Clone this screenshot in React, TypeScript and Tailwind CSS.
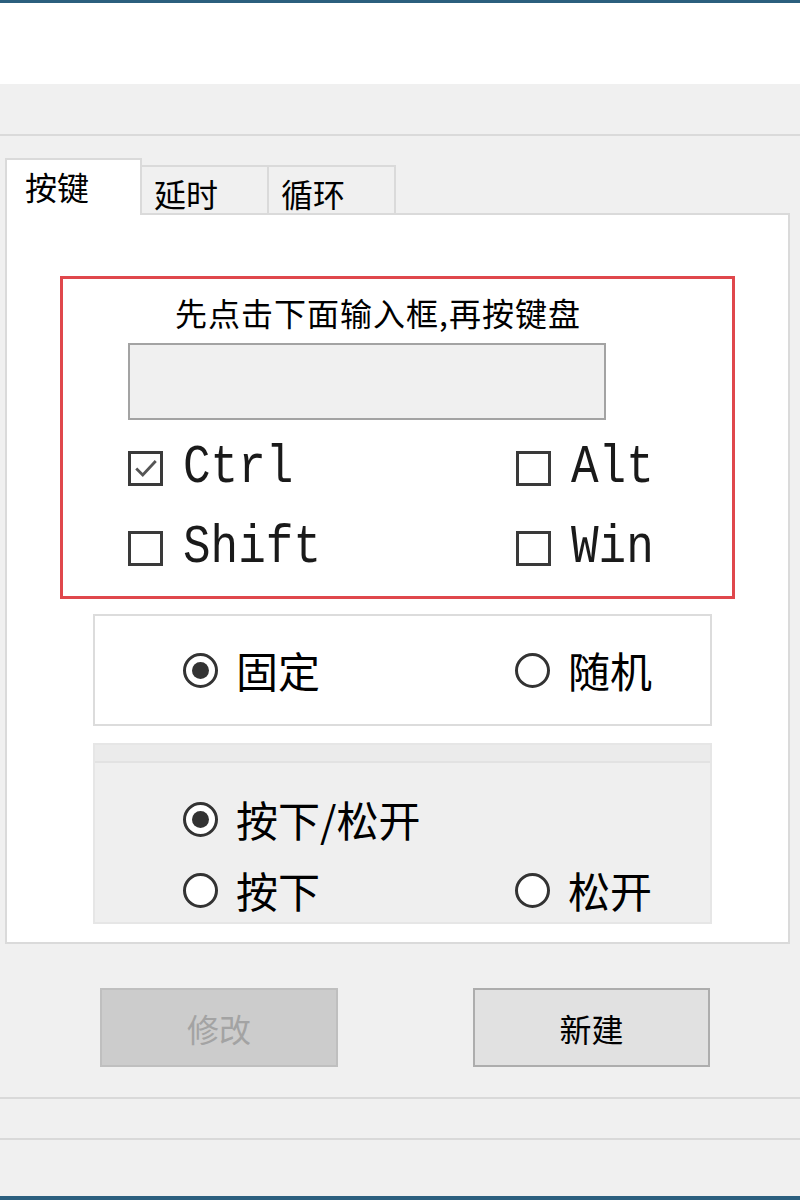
import { useState } from "react"

const cjk = "font-['Noto_Sans_CJK_SC',sans-serif]"
const mono = "font-['Liberation_Mono','Noto_Sans_CJK_SC',monospace]"

function CheckBox({ label, checked, onChange }: { label: string; checked: boolean; onChange: () => void }) {
  return (
    <button type="button" onClick={onChange} className="flex items-center gap-[20px]">
      <span className="flex h-[35px] w-[35px] items-center justify-center border-[3px] border-[#3a3a3a] bg-white">
        {checked && (
          <svg viewBox="0 0 24 24" className="h-[26px] w-[26px]">
            <path d="M3 12.5 L9 18.5 L21 5.5" fill="none" stroke="#555" strokeWidth="2.6" />
          </svg>
        )}
      </span>
      <span className={`${mono} inline-block scale-y-[1.15] text-[46px] leading-[46px] text-[#1a1a1a]`}>{label}</span>
    </button>
  )
}

function Radio({ label, checked, onSelect }: { label: string; checked: boolean; onSelect: () => void }) {
  return (
    <button type="button" onClick={onSelect} className="flex items-center gap-[18px]">
      <span className="flex h-[35px] w-[35px] items-center justify-center rounded-full border-[3px] border-[#333] bg-white">
        {checked && <span className="h-[17px] w-[17px] rounded-full bg-[#333]" />}
      </span>
      <span className={`${cjk} text-[42px] leading-[48px] text-black`}>{label}</span>
    </button>
  )
}

export default function App() {
  const [tab, setTab] = useState(0)
  const [mods, setMods] = useState({ Ctrl: true, Alt: false, Shift: false, Win: false })
  const [mode, setMode] = useState("fixed")
  const [action, setAction] = useState("both")

  const toggle = (k: keyof typeof mods) => setMods((m) => ({ ...m, [k]: !m[k] }))
  const tabs = ["按键", "延时", "循环"]

  return (
    <div className={`${cjk} flex h-[1200px] w-[800px] flex-col overflow-hidden bg-[#f0f0f0]`}>
      {/* title strip */}
      <div className="h-[3px] bg-[#2b5f7e]" />
      <div className="h-[81px] bg-white" />
      <div className="h-[52px] border-b-2 border-[#dadada]" />

      {/* tabs */}
      <div className="flex items-end pl-[5px] pt-[22px]">
        {tabs.map((t, i) =>
          i === tab ? (
            <button
              key={t}
              onClick={() => setTab(i)}
              className="relative z-10 -mb-[2px] flex h-[57px] w-[137px] items-start border-x-2 border-t-2 border-[#dadada] bg-white pl-[18px] pt-[6px] text-[32px] leading-[40px] text-black"
            >
              {t}
            </button>
          ) : (
            <button
              key={t}
              onClick={() => setTab(i)}
              className="flex h-[48px] w-[127px] items-start border-r-2 border-t-2 border-[#dadada] bg-[#f0f0f0] pl-[12px] pt-[6px] text-[32px] leading-[40px] text-black"
            >
              {t}
            </button>
          )
        )}
      </div>

      {/* tab page */}
      <div className="ml-[5px] mr-[10px] flex flex-col border-2 border-[#dadada] bg-white pb-[18px] pt-[61px]">
        <div className="ml-[53px] w-[675px] border-[3px] border-[#e0474c] pb-[25px] pl-[65px] pt-[14px]">
          <div className="pl-[47px] text-[32px] leading-[38px] tracking-[1px] text-black">先点击下面输入框,再按键盘</div>
          <div className="mt-[12px] h-[77px] w-[478px] border-2 border-[#a3a3a3] bg-[#f0f0f0]" />
          <div className="mt-[25px] grid grid-cols-[388px_1fr] gap-y-[34px]">
            <CheckBox label="Ctrl" checked={mods.Ctrl} onChange={() => toggle("Ctrl")} />
            <CheckBox label="Alt" checked={mods.Alt} onChange={() => toggle("Alt")} />
            <CheckBox label="Shift" checked={mods.Shift} onChange={() => toggle("Shift")} />
            <CheckBox label="Win" checked={mods.Win} onChange={() => toggle("Win")} />
          </div>
        </div>

        <div className="ml-[86px] mt-[15px] grid h-[112px] w-[619px] grid-cols-[332px_1fr] items-center border-2 border-[#dcdcdc] bg-white pl-[88px]">
          <Radio label="固定" checked={mode === "fixed"} onSelect={() => setMode("fixed")} />
          <Radio label="随机" checked={mode === "random"} onSelect={() => setMode("random")} />
        </div>

        <div className="ml-[86px] mt-[17px] flex h-[181px] w-[619px] flex-col border-2 border-[#e6e6e6] bg-[#efefef]">
          <div className="h-[18px] border-b-2 border-[#e2e2e2] bg-[#ebebeb]" />
          <div className="flex flex-col gap-[23px] pl-[88px] pt-[32px]">
            <Radio label="按下/松开" checked={action === "both"} onSelect={() => setAction("both")} />
            <div className="grid grid-cols-[332px_1fr]">
              <Radio label="按下" checked={action === "down"} onSelect={() => setAction("down")} />
              <Radio label="松开" checked={action === "up"} onSelect={() => setAction("up")} />
            </div>
          </div>
        </div>
      </div>

      {/* actions */}
      <div className="flex gap-[135px] pl-[100px] pt-[44px]">
        <button
          disabled
          className="flex h-[79px] w-[238px] items-center justify-center border-2 border-[#bfbfbf] bg-[#cccccc] text-[32px] text-[#a3a3a3]"
        >
          修改
        </button>
        <button className="flex h-[79px] w-[237px] items-center justify-center border-2 border-[#adadad] bg-[#e1e1e1] text-[32px] text-black">
          新建
        </button>
      </div>

      <div className="mt-[30px] h-[2px] bg-[#d9d9d9]" />
      <div className="mt-[39px] h-[2px] bg-[#d9d9d9]" />
      <div className="flex-1" />
      <div className="h-[4px] bg-[#2b5f7e]" />
    </div>
  )
}
